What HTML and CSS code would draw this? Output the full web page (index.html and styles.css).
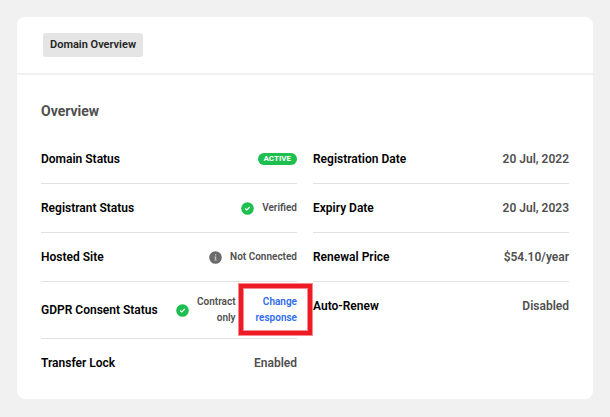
FILE: index.html
```
<!DOCTYPE html>
<html lang="en">
<head>
  <meta charset="UTF-8">
  <meta name="viewport" content="width=device-width, initial-scale=1.0">
  <title>Domain Overview</title>
  <link rel="stylesheet" href="styles.css">
</head>
<body>
  <main class="card">
    <nav class="tabs">
      <button type="button" class="tab">Domain Overview</button>
    </nav>

    <section class="overview">
      <h2>Overview</h2>
      <div class="columns">
        <dl class="list">
          <div class="row">
            <dt>Domain Status</dt>
            <dd><span class="badge">ACTIVE</span></dd>
          </div>
          <div class="row">
            <dt>Registrant Status</dt>
            <dd class="small">
              <svg class="icon" viewBox="0 0 13 13"><circle cx="6.5" cy="6.5" r="6.3" fill="#1dbf4f"/><path d="M4.2 6.5l1.6 1.5 3-3" fill="none" stroke="#fff" stroke-width="1.1"/></svg>
              <span>Verified</span>
            </dd>
          </div>
          <div class="row">
            <dt>Hosted Site</dt>
            <dd class="small">
              <svg class="icon" viewBox="0 0 13 13"><circle cx="6.5" cy="6.5" r="6.3" fill="#6b6b6b"/><path d="M6 3.2h1.2v1.2H6zM5.4 5.6h1.8v3.2h.7v.8H5.3v-.8H6V6.4h-.6z" fill="#c4c4c4"/></svg>
              <span>Not Connected</span>
            </dd>
          </div>
          <div class="row">
            <dt>GDPR Consent Status</dt>
            <dd class="small consent">
              <svg class="icon" viewBox="0 0 13 13"><circle cx="6.5" cy="6.5" r="6.3" fill="#1dbf4f"/><path d="M4.2 6.5l1.6 1.5 3-3" fill="none" stroke="#fff" stroke-width="1.1"/></svg>
              <span>Contract<br>only</span>
              <a href="#" class="change">Change<br>response</a>
            </dd>
          </div>
          <div class="row">
            <dt>Transfer Lock</dt>
            <dd>Enabled</dd>
          </div>
        </dl>

        <dl class="list">
          <div class="row">
            <dt>Registration Date</dt>
            <dd>20 Jul, 2022</dd>
          </div>
          <div class="row">
            <dt>Expiry Date</dt>
            <dd>20 Jul, 2023</dd>
          </div>
          <div class="row">
            <dt>Renewal Price</dt>
            <dd>$54.10/year</dd>
          </div>
          <div class="row">
            <dt>Auto-Renew</dt>
            <dd>Disabled</dd>
          </div>
        </dl>
      </div>
    </section>
  </main>
</body>
</html>
```
FILE: styles.css
```
* {
  box-sizing: border-box;
  padding: 0;
  margin: 0;
}
body {
  padding: 17px;
  background: #f1f1f1;
  color: #4f4f4f;
  font-family: Roboto, sans-serif;
  font-size: 12px;
  font-weight: 600;
  line-height: 24px;
}

.card {
  background: #fff;
  border-radius: 8px;
}

.tabs {
  padding: 16px 26px;
  border-bottom: 2px solid #f1f1f1;
}

.tab {
  display: block;
  height: 24px;
  padding: 0 7px;
  border: none;
  border-radius: 3px;
  background: #e5e5e5;
  color: #222;
  font: inherit;
  font-size: 11px;
}

.overview {
  padding: 24px 24px 12px;
}

h2 {
  margin-bottom: 12px;
  font-size: 14px;
  font-weight: 700;
  line-height: 24px;
}

.columns {
  display: grid;
  grid-template-columns: 1fr 1fr;
  gap: 16px;
  align-items: start;
}

.row {
  display: flex;
  justify-content: space-between;
  align-items: center;
  padding: 12px 0;
  border-bottom: 1px solid #e2e2e2;
}

.row:last-child {
  border-bottom: none;
}

dt {
  color: #000;
  white-space: nowrap;
}

dd {
  display: flex;
  align-items: center;
  text-align: right;
}

.small {
  gap: 8px;
  font-size: 10px;
}

.consent {
  line-height: 16px;
}

.icon {
  width: 13px;
  height: 13px;
  flex: none;
}

.badge {
  padding: 0 6px;
  border-radius: 6px;
  background: #1dbf4f;
  color: #fff;
  font-size: 8px;
  font-weight: 700;
  line-height: 12px;
}

.change {
  position: relative;
  margin-left: 12px;
  color: #2f6bed;
  text-decoration: none;
}

/* red frame around the link */
.change::after {
  content: "";
  position: absolute;
  inset: -10px -15px -9px -17px;
  border: 4px solid #ed1c24;
  box-shadow: 0 0 0 1px #f58a8f, inset 0 0 0 1px #f58a8f;
}
```
